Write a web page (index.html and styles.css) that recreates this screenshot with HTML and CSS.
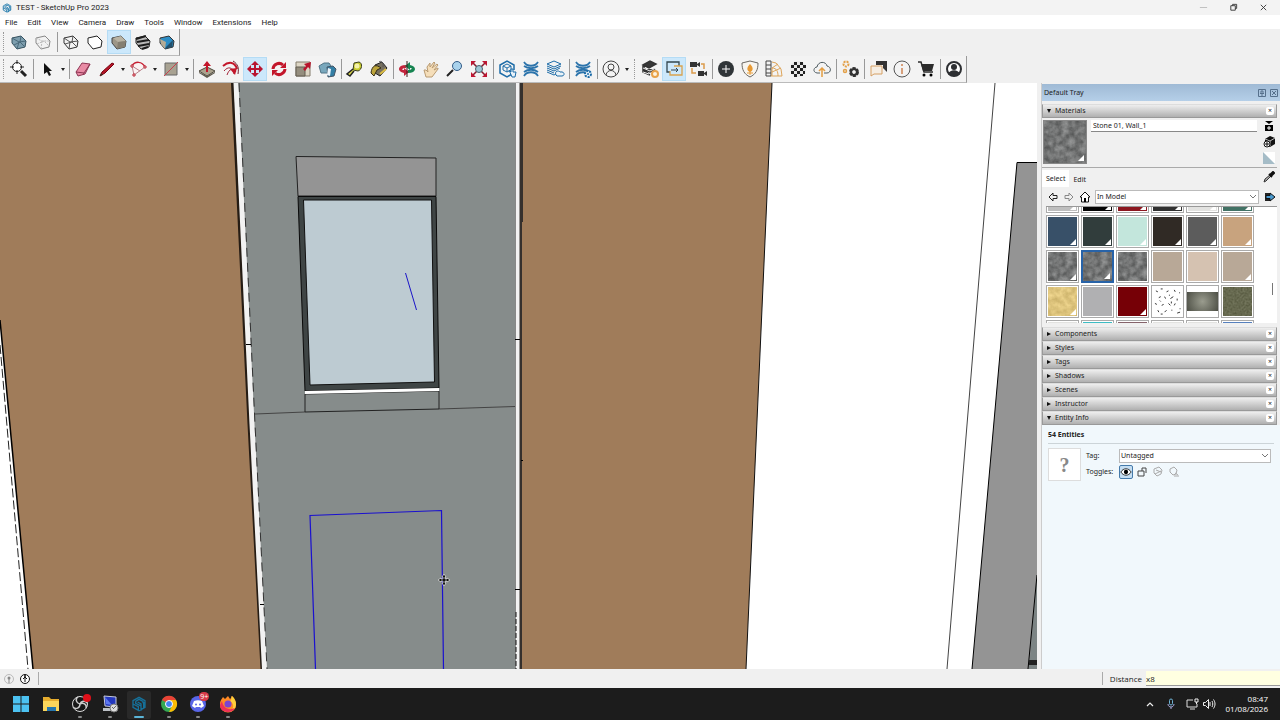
FILE: index.html
```
<!DOCTYPE html>
<html lang="en">
<head>
	<meta charset="UTF-8">
	<title>TEST - SketchUp Pro 2023</title>
	<link rel="stylesheet" href="styles.css">
</head>
<body>
	<!-- shared symbols -->
	<svg class="defs" aria-hidden="true">
		<filter id="stone" x="0" y="0" width="100%" height="100%" color-interpolation-filters="sRGB">
			<feTurbulence type="fractalNoise" baseFrequency="0.16" numOctaves="3" seed="4"/>
			<feColorMatrix values="0.35 0 0 0 0.28  0.35 0 0 0 0.285  0.35 0 0 0 0.285  0 0 0 0 1"/>
		</filter>
		<filter id="sand" x="0" y="0" width="100%" height="100%" color-interpolation-filters="sRGB">
			<feTurbulence type="fractalNoise" baseFrequency="0.18" numOctaves="3" seed="2"/>
			<feColorMatrix values="0.2 0 0 0 0.77  0.2 0 0 0 0.67  0.2 0 0 0 0.39  0 0 0 0 1"/>
		</filter>
		<filter id="moss" x="0" y="0" width="100%" height="100%" color-interpolation-filters="sRGB">
			<feTurbulence type="fractalNoise" baseFrequency="0.5" numOctaves="2" seed="7"/>
			<feColorMatrix values="0.2 0 0 0 0.3  0.2 0 0 0 0.31  0.2 0 0 0 0.21  0 0 0 0 1"/>
		</filter>
		<symbol id="cube" viewBox="0 0 24 24">
			<path d="M5 8l9-2 5 5-1 6-8 2-5-6z" stroke="currentColor" stroke-linejoin="round"/>
		</symbol>
		<symbol id="waves" viewBox="0 0 24 24">
			<path d="M5 5c3 5 11 5 14 0M5 9c4 3 10 3 14 0M5 15c4-3 10-3 14 0M5 19c3-5 11-5 14 0" fill="none" stroke="#2b73ab" stroke-width="1.800"/>
		</symbol>
		<symbol id="sketchup" viewBox="0 0 24 24">
			<path d="M3 7l9-5 9 5v10l-9 5-9-5zM7 8l5-3 6 3v3M7 8v3l8 4v3M3 12l8 4v5M15 22V12l-5-3M19 19V9" fill="none" stroke="currentColor" stroke-width="2"/>
		</symbol>
	</svg>

	<header class="titlebar">
		<svg class="logo" viewBox="0 0 24 24"><use href="#sketchup"/></svg>
		<h1>TEST - SketchUp Pro 2023</h1>
		<div class="controls">
			<button aria-label="Minimize"><svg viewBox="0 0 10 10"><path d="M1 5h8" stroke="#bbb"/></svg></button>
			<button aria-label="Restore"><svg viewBox="0 0 10 10"><path d="M2 3h5v5H2zM4 3V1.500h4.500V6H7" fill="none" stroke="#333"/></svg></button>
			<button aria-label="Close"><svg viewBox="0 0 10 10"><path d="M2 2l6 6M8 2l-6 6" stroke="#333"/></svg></button>
		</div>
	</header>

	<nav class="menubar">
		<button>File</button>
		<button>Edit</button>
		<button>View</button>
		<button>Camera</button>
		<button>Draw</button>
		<button>Tools</button>
		<button>Window</button>
		<button>Extensions</button>
		<button>Help</button>
	</nav>

	<!-- face styles -->
	<div class="toolbar styles">
		<span class="grip"></span>
		<button aria-label="X-Ray"><svg viewBox="0 0 24 24"><g color="#34505e" fill="#7d9eae"><use href="#cube"/></g><path d="M5 8l7 4 7-1M12 12l-2 7M7 15l6-3 5 5M14 6l-1 6" fill="none" stroke="#49697a"/></svg></button>
		<button aria-label="Back Edges"><svg viewBox="0 0 24 24"><g color="#888" fill="#f2f2f2"><use href="#cube"/></g><path d="M5 8l6 3 8 0M11 11l-1 8M6 14l7-3 5 5" fill="none" stroke="#bbb" stroke-dasharray="2 1"/></svg></button>
		<span class="sep"></span>
		<button aria-label="Wireframe"><svg viewBox="0 0 24 24"><g color="#333" fill="none"><use href="#cube"/></g><path d="M5 8l6 4 8-1M11 12l-1 7M6 14l7-2 5 5M14 6l-1 6" fill="none" stroke="#555"/></svg></button>
		<button aria-label="Hidden Line"><svg viewBox="0 0 24 24"><g color="#222" fill="#fff"><use href="#cube"/></g></svg></button>
		<button class="on" aria-label="Shaded"><svg viewBox="0 0 24 24"><g color="#444" fill="#9d9788"><use href="#cube"/></g><path d="M6 8l8-2 5 5-8 1z" fill="#b9b3a3"/><path d="M11 12l8-1-1 6-8 2z" fill="#857f71"/></svg></button>
		<button aria-label="Shaded with Textures"><svg viewBox="0 0 24 24"><g color="#222" fill="#bbb"><use href="#cube"/></g><path d="M5 9l10-3M6 12l12-2M7 16l11-2M11 19l6-2" stroke="#1d1d1d" stroke-width="2"/></svg></button>
		<button aria-label="Monochrome"><svg viewBox="0 0 24 24"><g color="#333" fill="#2d8dc4"><use href="#cube"/></g><path d="M5 9l6 3-1 7-4-5z" fill="#b6ab94"/><path d="M11 17l7-7-1 7-7 2z" fill="#24516c"/></svg></button>
	</div>

	<div class="toolbar tools">
		<span class="grip"></span>
		<button aria-label="Search"><svg viewBox="0 0 24 24"><circle cx="10" cy="10" r="4.500" fill="#fff" stroke="#222"/><path d="M10 3v4M10 13v4M3 10h4M13 10h4" stroke="#222"/><path d="M14 14l5 5" stroke="#222" stroke-width="3"/></svg></button>
		<span class="sep"></span>
		<button aria-label="Select"><svg viewBox="0 0 24 24"><path d="M9 6v11l3-2 2 4 2-1-2-4h3z" fill="#111"/></svg></button>
		<button class="drop" aria-label="Select options"></button>
		<span class="sep"></span>
		<button aria-label="Eraser"><svg viewBox="0 0 24 24"><path d="M5 15l6-9 8 1-5 10-7 2z" fill="#e98ba5" stroke="#8d3553"/><path d="M5 15l8 1 6-9M13 16l-1 2" stroke="#8d3553" fill="none"/></svg></button>
		<button aria-label="Lines"><svg viewBox="0 0 24 24"><path d="M5 19l2-4 10-9 2 1-9 9z" fill="#b51626" stroke="#701"/><path d="M5 19l1-3 2 2z" fill="#332"/></svg></button>
		<button class="drop" aria-label="Line options"></button>
		<button aria-label="Arcs"><svg viewBox="0 0 24 24"><path d="M7 18L5 9C8 4 15 4 18 10z" fill="#fbf3f3"/><path d="M7 18L18 10M5 9l8 5M7 18L5 9" stroke="#b98089"/><path d="M5 9C8 4 15 4 18 10" fill="none" stroke="#c62034" stroke-width="1.500"/><path d="M6 17h2v2H6zM17 9h2v2h-2zM4 8h2v2H4z" fill="#fff" stroke="#b23"/></svg></button>
		<button class="drop" aria-label="Arc options"></button>
		<button aria-label="Shapes"><svg viewBox="0 0 24 24"><path d="M6 6h12v12H6z" fill="#a8a292" stroke="#666"/><path d="M5 19L19 5" stroke="#c8404e"/></svg></button>
		<button class="drop" aria-label="Shape options"></button>
		<span class="sep"></span>
		<button aria-label="Push/Pull"><svg viewBox="0 0 24 24"><path d="M4 14l8-4 8 4-8 5z" fill="#aaa28d" stroke="#4d493e"/><path d="M4 15l8 4 8-4v1l-8 5-8-5z" fill="#605b4e"/><path d="M11 15V9H8l4-5 4 5h-3v6z" fill="#c3162a"/></svg></button>
		<button aria-label="Follow Me"><svg viewBox="0 0 24 24"><path d="M4 9c6-5 12-4 14 3" fill="none" stroke="#c3162a" stroke-width="2"/><path d="M5 14c4-5 9-4 10 3M8 18c2-6 6-8 9-3" fill="none" stroke="#a3263a"/><path d="M14 4c5 3 6 7 5 13" fill="none" stroke="#702231"/><path d="M11 12l7-1-2 7z" fill="#c3162a"/></svg></button>
		<button class="on" aria-label="Move"><svg viewBox="0 0 24 24"><path d="M12 4l4 4h-3v3h3V8l4 4-4 4v-3h-3v3h3l-4 4-4-4h3v-3H8v3l-4-4 4-4v3h3V8H8z" fill="#b81431"/></svg></button>
		<button aria-label="Rotate"><svg viewBox="0 0 24 24"><path d="M6 12a6 6 0 0 1 10-4M18 12a6 6 0 0 1-10 4" fill="none" stroke="#c3162a" stroke-width="3"/><path d="M19 5v6h-6zM5 19v-6h6z" fill="#c3162a"/></svg></button>
		<button aria-label="Scale"><svg viewBox="0 0 24 24"><path d="M5 5h14v14H5z" fill="#ddd6c5" stroke="#847c6c"/><path d="M5 10h9v9H5z" fill="#958e7e" stroke="#625d51"/><path d="M12 12l3-3-2-2 7-2-1 7-2-2-3 4z" fill="#b8142c"/></svg></button>
		<button aria-label="Outer Shell"><svg viewBox="0 0 24 24"><path d="M4 9l5-3h5l2 3v7H6z" fill="#79a8bd" stroke="#507587"/><path d="M12 10l6-1 3 3-2 7-6 1z" fill="#347fa5" stroke="#456"/><path d="M13 11l3 1-1 7-3-1z" fill="#edf6fc"/></svg></button>
		<span class="sep"></span>
		<button aria-label="Tape Measure"><svg viewBox="0 0 24 24"><path d="M11 6l5-1c4 1 3 8-1 9l-5-1z" fill="#c8cc2e" stroke="#3c3f20"/><path d="M10 12l-6 5 3 2 4-5" stroke="#222" stroke-width="1.500" fill="#d8d64a"/><circle cx="14" cy="9" r="2.500" fill="#f4f1aa"/></svg></button>
		<button aria-label="Paint Bucket"><svg viewBox="0 0 24 24"><path d="M8 8l7-3 5 6-7 8-5-3z" fill="#77705f" stroke="#222"/><path d="M4 16c1-8 5-9 10-5l-4 2-3 6z" fill="#bda53b" stroke="#342d16"/><path d="M12 5c2-2 5 1 4 5" fill="none" stroke="#555"/><path d="M13 17l6-5" stroke="#dabb42" stroke-width="2"/></svg></button>
		<span class="sep"></span>
		<button aria-label="Orbit"><svg viewBox="0 0 24 24"><path d="M11 8c-9 0-9 7-2 8v3l5-4-5-4v2c-3 0-2-2 2-2z" fill="#c3243c"/><path d="M13 16c9 0 9-7 2-8V5l-5 4 5 4v-2c3 0 2 2-2 2z" fill="#168451"/><path d="M12 4v16" stroke="#3b1919"/></svg></button>
		<button aria-label="Pan"><svg viewBox="0 0 24 24"><path d="M7 20l-2-7 2 0 2 2-1-5 3-4v4l4-5 1 1-3 5 5-4 1 1-4 5 4-2v1l-6 8z" fill="#f5deb9" stroke="#b99b72"/></svg></button>
		<button aria-label="Zoom"><svg viewBox="0 0 24 24"><circle cx="14" cy="9" r="4.500" fill="#a9d2ec" stroke="#335b86"/><path d="M10 13l-6 6" stroke="#222" stroke-width="2"/></svg></button>
		<button aria-label="Zoom Extents"><svg viewBox="0 0 24 24"><path d="M5 5l14 14M19 5L5 19" stroke="#861a2d" stroke-width="1.500"/><path d="M4 4h5L4 9zM20 4h-5l5 5zM4 20v-5l5 5zM20 20v-5l-5 5z" fill="#be1632"/><circle cx="12" cy="12" r="3.500" fill="#9cc7d5" stroke="#445e6a"/></svg></button>
		<span class="sep"></span>
		<button aria-label="3D Warehouse"><svg viewBox="0 0 24 24"><path d="M17 17l-5 3-7-4V8l7-4 7 4v5" fill="none" stroke="#1d6ca8" stroke-width="1.500"/><path d="M8 9l4-2 4 2v4l-4 2-4-2zM8 9l4 2 4-2M12 11v4" fill="none" stroke="#1d6ca8"/><path d="M14 13l2 2v-3h2v3h3l-1 5h-3z" fill="#e9f3fa" stroke="#1d6ca8"/></svg></button>
		<button aria-label="Extension Warehouse"><svg viewBox="0 0 24 24"><use href="#waves"/></svg></button>
		<button aria-label="Share Model"><svg viewBox="0 0 24 24"><path d="M4 7l7-3 7 3-7 3zM4 11l7 3 6-3M4 15l7 3 4-2M4 9l7 3 7-3M4 13l7 3" fill="none" stroke="#1d6ca8"/><path d="M13 18c-2-4 3-5 4-3 5-1 5 4 2 4h-5z" fill="#eaf3f8" stroke="#1d6ca8"/></svg></button>
		<span class="sep"></span>
		<button aria-label="Extension Manager"><svg viewBox="0 0 24 24"><use href="#waves"/><circle cx="17" cy="17" r="3" fill="#eef5fa" stroke="#1d6ca8" stroke-width="2" stroke-dasharray="2 1"/><circle cx="17" cy="17" r="1" fill="#1d6ca8"/></svg></button>
		<span class="sep"></span>
		<button aria-label="Account"><svg viewBox="0 0 24 24"><circle cx="12" cy="12" r="8" fill="none" stroke="#444"/><circle cx="12" cy="10" r="3" fill="none" stroke="#444"/><path d="M7 18c1-6 9-6 10 0" fill="none" stroke="#444"/></svg></button>
		<button class="drop" aria-label="Account options"></button>
		<span class="grip wide"></span>
		<button aria-label="Layers settings"><svg viewBox="0 0 24 24"><path d="M5 8l7-4 6 3-7 4zM5 12l7 3 5-3M5 8v7l7 3" fill="#383838" stroke="#333" stroke-width="1.500"/><path d="M5 11l7 3 6-3M5 15l6 2" fill="none" stroke="#eee"/><circle cx="17" cy="17" r="3" fill="#fff2dc" stroke="#e8a24a" stroke-width="2"/></svg></button>
		<button class="on" aria-label="Sync view"><svg viewBox="0 0 24 24"><path d="M8 15H5V5h12v4" fill="none" stroke="#32454e" stroke-width="1.300"/><path d="M12 9h8v9H8v-4" fill="none" stroke="#d9a24e" stroke-width="1.300"/><path d="M9 13h7M14 11l2 2-2 2" fill="none" stroke="#32454e"/></svg></button>
		<button aria-label="Camera path"><svg viewBox="0 0 24 24"><path d="M4 5h7v5H4zM11 7l3-2v5l-3-2M12 14h6v5h-6zM18 16l3-2v5l-3-2" fill="#333"/><path d="M15 7h3v5M6 11v5h4" fill="none" stroke="#db9c4c" stroke-width="1.500"/></svg></button>
		<span class="sep"></span>
		<button aria-label="Add"><svg viewBox="0 0 24 24"><circle cx="12" cy="12" r="8" fill="#303538"/><path d="M12 8v8M8 12h8" stroke="#fff"/></svg></button>
		<button aria-label="Shield"><svg viewBox="0 0 24 24"><path d="M12 4l8 2c0 7-2 11-8 14-6-3-8-7-8-14z" fill="#f8f5ef" stroke="#6c6964"/><path d="M12 7c4 4 3 7 0 8-3-1-4-4 0-8" fill="#e79a35"/><path d="M9 16h6M12 13v5" stroke="#e79a35"/></svg></button>
		<button aria-label="Palette"><svg viewBox="0 0 24 24"><path d="M4 4h5v15H4zM4 8h5M4 12h5M4 16h5" fill="none" stroke="#464646"/><path d="M10 5l4 1 5 6 1 7H9M10 11l6-4M10 15l9-4M10 19v-8c5 0 6 4 6 8" fill="none" stroke="#dda55b"/></svg></button>
		<button aria-label="Checker"><svg viewBox="0 0 24 24"><circle cx="12" cy="12" r="8" fill="#e8e8e8"/><path d="M8 5h3v3H8zM14 5h3v3h-3zM5 8h3v3H5zM11 8h3v3h-3zM17 8h3v3h-3zM8 11h3v3H8zM14 11h3v3h-3zM5 14h3v3H5zM11 14h3v3h-3zM17 14h2v3h-2zM8 17h3v3H8zM14 17h3v2h-3z" fill="#222"/></svg></button>
		<button aria-label="Upload"><svg viewBox="0 0 24 24"><path d="M10 16H7c-5-1-3-6 0-6 1-6 9-6 10-1 5 1 4 7 0 7h-3" fill="none" stroke="#505d62"/><path d="M12 20v-9M9 14l3-3 3 3" fill="none" stroke="#e49e42" stroke-width="1.500"/></svg></button>
		<span class="sep"></span>
		<button aria-label="Settings"><svg viewBox="0 0 24 24"><circle cx="8" cy="7" r="2.500" fill="none" stroke="#e3a149" stroke-width="2" stroke-dasharray="2 1"/><circle cx="7" cy="14" r="1.500" fill="none" stroke="#e3a149" stroke-width="1.500"/><circle cx="16" cy="15" r="3.500" fill="none" stroke="#333" stroke-width="3" stroke-dasharray="2.700 1"/><circle cx="16" cy="15" r="3" fill="none" stroke="#333" stroke-width="2"/></svg></button>
		<span class="sep"></span>
		<button aria-label="Windows"><svg viewBox="0 0 24 24"><path d="M10 4h11v11l-4-4V8h-7z" fill="#333"/><path d="M5 9h11v8h-8l-3 2z" fill="#f6eee3" stroke="#d6a064"/></svg></button>
		<button aria-label="Info"><svg viewBox="0 0 24 24"><circle cx="12" cy="12" r="8" fill="none" stroke="#555"/><path d="M12 11v6M12 7v2" stroke="#ce8454" stroke-width="1.500"/></svg></button>
		<button aria-label="Cart"><svg viewBox="0 0 24 24"><path d="M4 5h3l3 10h9" fill="none" stroke="#2c2c2c" stroke-width="1.500"/><path d="M7 7h13l-2 7H9z" fill="#2c2c2c"/><circle cx="10" cy="18" r="1.500"/><circle cx="17" cy="18" r="1.500"/></svg></button>
		<span class="sep"></span>
		<button aria-label="Profile"><svg viewBox="0 0 24 24"><circle cx="12" cy="12" r="7" fill="#fff" stroke="#2d2f32" stroke-width="2"/><circle cx="12" cy="10" r="3" fill="#2d2f32"/><path d="M6 17c2-5 10-5 12 0-3 3-9 3-12 0" fill="#2d2f32"/></svg></button>
	</div>

	<main class="workspace">
		<div class="viewport">
			<svg class="scene" viewBox="0 83 1037 586" preserveAspectRatio="xMinYMin slice" role="img" aria-label="Model view">
				<!-- left wall -->
				<path d="M0 83H233L263 669H33L0 322z" fill="#a07c5a"/>
				<path d="M0 320L33 669" stroke="#000" stroke-width="1.500"/>
				<path d="M0 345L28 669" stroke="#222" stroke-dasharray="9 3"/>
				<!-- middle facade -->
				<path d="M236 83H517V669H266z" fill="#868c8b"/>
				<path d="M232.500 83L249 424L262 669" fill="none" stroke="#251c14" stroke-width="3"/>
				<path d="M236 83L252 424L264.500 669" fill="none" stroke="#f2f2f2" stroke-width="5"/>
				<path d="M239 83L255 424L267 669" fill="none" stroke="#333" stroke-dasharray="9 6"/>
				<path d="M246 344.500h5M260 604.500h4" stroke="#000"/>
				<path d="M255 414L305 412M439 409L515 406.500" stroke="#444"/>
				<!-- window -->
				<path d="M296 156.500L436 158V196H298z" fill="#949494" stroke="#222"/>
				<path d="M298 196.500H436L439 388L305 391z" fill="#3f4545" stroke="#0a0a0a"/>
				<path d="M303.500 200H431.500L434.500 382L310 385z" fill="#bdcbd2" stroke="#111"/>
				<path d="M305 394L439 391V409L305 412z" fill="#868c8b" stroke="#222"/>
				<path d="M305 391L439 388V391L305 394z" fill="#fff"/>
				<path d="M405.500 273L416.500 310" stroke="#1a14c8"/>
				<!-- right wall -->
				<path d="M522 83H772L746 669H522z" fill="#a07c5a"/>
				<path d="M772 83L746 669" stroke="#111"/>
				<path d="M515 83h5v586h-5z" fill="#f2f2f2"/>
				<path d="M515.500 83V669" stroke="#888"/>
				<path d="M519.500 83h3.500v139h-1v447h-2.500z" fill="#35302d"/>
				<path d="M515 339.500h5M515 589.500h5M521 460.500h2" stroke="#000"/>
				<path d="M516 612V669" stroke="#111" stroke-dasharray="5 2"/>
				<!-- far right -->
				<path d="M995 83L947 669" stroke="#444"/>
				<path d="M1017 162H1037V669H972z" fill="#949494"/>
				<path d="M1037 162.500H1017L972 669" fill="none" stroke="#000"/>
				<path d="M1037 575V669H1029z" fill="#7c8484"/>
				<path d="M1037 575L1028 669" stroke="#000"/>
				<path d="M1029 660h8v5h-8z" fill="#222"/>
				<!-- moved copy -->
				<path d="M315.500 669L310 515.500L441.500 510.500L443.500 669" fill="none" stroke="#1a10d0" stroke-width="1.200"/>
				<path d="M444 574l2 3h-1v2h2v-1l3 2-3 2v-1h-2v2h1l-2 3-2-3h1v-2h-2v1l-3-2 3-2v1h2v-2h-1z" fill="#111" stroke="#e8e8e8" stroke-width="0.700"/>
			</svg>
		</div>

		<aside class="tray">
			<header class="tray-title">
				<h2>Default Tray</h2>
				<button class="pin" aria-label="Pin"><svg viewBox="0 0 8 8"><path d="M0.500 0.500h7v7h-7zM3 2v2.500h2V2zM2 4.500h4M4 5v2" fill="none" stroke="#56708c"/></svg></button>
				<button class="pin" aria-label="Close tray"><svg viewBox="0 0 8 8"><path d="M0.500 0.500h7v7h-7zM2 2l4 4M6 2l-4 4" fill="none" stroke="#56708c"/></svg></button>
			</header>

			<section class="materials">
				<h3 class="bar open"><button class="fold">Materials</button><button class="x" aria-label="Close Materials">×</button></h3>
				<div class="current">
					<div class="preview used"><svg><rect width="100%" height="100%" filter="url(#stone)"/></svg></div>
					<input type="text" aria-label="Material name" value="Stone 01, Wall_1">
					<div class="side">
						<button aria-label="Secondary pane"><svg viewBox="0 0 12 12"><path d="M2 1h8L6 4z"/><path d="M2 5h8v6H2z"/><path d="M6 6v4M4 8h4" stroke="#fff"/></svg></button>
						<button aria-label="Create Material"><svg viewBox="0 0 12 12"><path d="M2 3l5-3 5 2v6l-5 3-5-2z" fill="#111"/><path d="M2 3l5 2 5-3M7 5v5" stroke="#bbb" fill="none"/><circle cx="4" cy="8" r="3" fill="#fff" stroke="#111"/><path d="M4 6v4M2 8h4" stroke="#111"/></svg></button>
						<button aria-label="Default material"><svg viewBox="0 0 12 12"><path d="M0 0h12v12H0z" fill="#fff"/><path d="M0 0l12 12H0z" fill="#a5bcc7"/></svg></button>
					</div>
				</div>
				<div class="tabs">
					<button class="active">Select</button>
					<button>Edit</button>
					<button class="pick" aria-label="Sample Paint"><svg viewBox="0 0 12 12"><path d="M1 11l1-3 5-4 1 1-5 5z" fill="#aaa" stroke="#333"/><path d="M6 3l3 3M7 4l3-3 1 1-3 3" stroke="#111" stroke-width="2"/></svg></button>
				</div>
				<div class="nav">
					<button aria-label="Back"><svg viewBox="0 0 12 12"><path d="M2 6l4-4v2.500h4v3H6V10z" fill="none" stroke="#222"/></svg></button>
					<button aria-label="Forward"><svg viewBox="0 0 12 12"><path d="M10 6L6 2v2.500H2v3h4V10z" fill="none" stroke="#888"/></svg></button>
					<button aria-label="In Model"><svg viewBox="0 0 12 12"><path d="M1 6l5-5 5 5H9.500v5h-7V6z" fill="#fff" stroke="#111"/><path d="M5 7h2v4H5z"/></svg></button>
					<select aria-label="Library"><option>In Model</option></select>
					<button class="details" aria-label="Details"><svg viewBox="0 0 12 12"><path d="M1 2h6v8H1z" fill="#222"/><path d="M2 4.500h4V2l5 4-5 4V7.500H2z" fill="#4a9bd1" stroke="#111"/></svg></button>
				</div>
				<div class="library">
					<div class="swatches">
						<button class="used silver"></button>
						<button class="used black"></button>
						<button class="used red"></button>
						<button class="used coal"></button>
						<button class="used pale"></button>
						<button class="used teal"></button>
						<button class="used navy"></button>
						<button class="used forest"></button>
						<button class="used mint"></button>
						<button class="used umber"></button>
						<button class="used slate"></button>
						<button class="used tan"></button>
						<button class="used"><svg><rect width="100%" height="100%" filter="url(#stone)"/></svg></button>
						<button class="used picked"><svg><rect width="100%" height="100%" filter="url(#stone)"/></svg></button>
						<button><svg><rect width="100%" height="100%" filter="url(#stone)"/></svg></button>
						<button class="taupe"></button>
						<button class="beige"></button>
						<button class="used taupe"></button>
						<button class="used"><svg><rect width="100%" height="100%" filter="url(#sand)"/></svg></button>
						<button class="gray"></button>
						<button class="used maroon"></button>
						<button><svg viewBox="0 0 30 30"><path d="M3 4l2 1M8 2h2M14 5l2-1M22 3l1 2M27 6h1M6 11l2-1M12 10l1 2M18 12l3-2M25 12v2M2 17l2 1M9 19l2-1M16 17l2 2M22 19l1-2M28 22v1M5 24l1 2M12 26l2-2M19 24h1M8 28h2M25 27l3-1M17 8v1M19 15v2M7 14l1 1" stroke="#333"/></svg></button>
						<button class="metal"></button>
						<button><svg><rect width="100%" height="100%" filter="url(#moss)"/></svg></button>
						<button class="pale"></button>
						<button class="cyan"></button>
						<button class="plum"></button>
						<button class="pale"></button>
						<button class="pale"></button>
						<button class="blue"></button>
					</div>
					<div class="scroll"></div>
				</div>
			</section>

			<h3 class="bar"><button class="fold">Components</button><button class="x" aria-label="Close Components">×</button></h3>
			<h3 class="bar"><button class="fold">Styles</button><button class="x" aria-label="Close Styles">×</button></h3>
			<h3 class="bar"><button class="fold">Tags</button><button class="x" aria-label="Close Tags">×</button></h3>
			<h3 class="bar"><button class="fold">Shadows</button><button class="x" aria-label="Close Shadows">×</button></h3>
			<h3 class="bar"><button class="fold">Scenes</button><button class="x" aria-label="Close Scenes">×</button></h3>
			<h3 class="bar"><button class="fold">Instructor</button><button class="x" aria-label="Close Instructor">×</button></h3>
			<h3 class="bar open"><button class="fold">Entity Info</button><button class="x" aria-label="Close Entity Info">×</button></h3>

			<section class="entity">
				<h4>54 Entities</h4>
				<div class="fields">
					<div class="unknown">?</div>
					<div class="rows">
						<div class="row">
							<label for="tag">Tag:</label>
							<select id="tag"><option>Untagged</option></select>
						</div>
						<div class="row">
							<span class="label">Toggles:</span>
							<button class="on" aria-label="Visible"><svg viewBox="0 0 14 14"><path d="M1 7c3-5 9-5 12 0-3 5-9 5-12 0z" fill="#fff" stroke="#111"/><circle cx="7" cy="7" r="2.500"/></svg></button>
							<button aria-label="Lock"><svg viewBox="0 0 14 14"><path d="M3 6h6v5H3zM7 6V3h4v5" fill="none" stroke="#444"/></svg></button>
							<button aria-label="Receive shadows"><svg viewBox="0 0 14 14"><path d="M3 4l5-2 3 3-1 4-4 2-3-3zM5 5l5 2M4 9l6-3" fill="none" stroke="#aaa"/></svg></button>
							<button aria-label="Cast shadows"><svg viewBox="0 0 14 14"><path d="M3 4l4-2 3 3-1 4-3 1-3-3zM7 11h5M8 8l3 2" fill="none" stroke="#aaa"/></svg></button>
						</div>
					</div>
				</div>
			</section>
		</aside>
	</main>

	<footer class="status">
		<button aria-label="Geo-location"><svg viewBox="0 0 12 12"><circle cx="6" cy="6" r="4.500" fill="none" stroke="#bbb"/><circle cx="6" cy="5" r="1.500" fill="#888"/><path d="M6 6v4" stroke="#888"/></svg></button>
		<button aria-label="Credits"><svg viewBox="0 0 12 12"><circle cx="6" cy="6" r="4.500" fill="#fff" stroke="#111"/><path d="M6 5v4M4 6l2-2 2 2" fill="none" stroke="#111"/><path d="M6 2v2" stroke="#111" stroke-width="1.500"/></svg></button>
		<p class="hint"></p>
		<label for="distance">Distance</label>
		<input type="text" id="distance" value="x8">
	</footer>

	<footer class="taskbar">
		<div class="apps">
			<button aria-label="Start"><svg viewBox="0 0 24 24"><path d="M4 4h7.500v7.500H4zM12.500 4H20v7.500h-7.500zM4 12.500h7.500V20H4zM12.500 12.500H20V20h-7.500z" fill="#4cc2f1"/></svg></button>
			<button aria-label="File Explorer"><svg viewBox="0 0 24 24"><path d="M4 5h6l2 2h8v12H4z" fill="#e6ad2e"/><path d="M4 9h16v10H4z" fill="#fbd65b"/><path d="M8 19v-4h9v4z" fill="#2576ae"/></svg></button>
			<button class="run" aria-label="OBS Studio"><svg viewBox="0 0 24 24"><circle cx="12" cy="12" r="7.500" fill="#171717" stroke="#ddd"/><path d="M12 12c-4-1-5-5-2-7M12 12c0 4-4 6-7 3M12 12c4-2 7 1 6 4M12 12c1-3 5-4 7-1" fill="none" stroke="#ccc" stroke-width="1.500"/><circle cx="19" cy="6" r="4" fill="#e0101a"/></svg></button>
			<button class="run" aria-label="Remote Desktop"><svg viewBox="0 0 24 24"><path d="M6 4l12 1v10L7 14z" fill="#2337bd" stroke="#c7cbdc"/><path d="M7 5l7 8-6-1z" fill="#5d78f0"/><path d="M5 16h9v3H5z" fill="#bcc1c6"/><circle cx="16" cy="16" r="4" fill="#ddd" stroke="#777"/><path d="M14 15l2 2M18 14l-2 2" stroke="#666"/></svg></button>
			<button class="run current-app" aria-label="SketchUp"><svg viewBox="0 0 24 24" color="#16719a"><use href="#sketchup" x="4" y="4" width="16" height="16"/></svg></button>
			<button class="run" aria-label="Chrome"><svg viewBox="0 0 24 24"><circle cx="12" cy="12" r="8" fill="#35a853"/><path d="M12 12L5 8a8 8 0 0 1 14 0z" fill="#e94235"/><path d="M12 12V8h7a8 8 0 0 1-7 12l3-6z" fill="#fbbc05"/><circle cx="12" cy="12" r="3.500" fill="#4285f4" stroke="#fff"/></svg></button>
			<button class="run" aria-label="Discord"><svg viewBox="0 0 24 24"><circle cx="12" cy="12" r="8" fill="#5865e8"/><path d="M8 9c3-1 5-1 8 0l2 5-3 2-1-1h-4l-1 1-3-2z" fill="#fff"/><circle cx="10" cy="12.500" r="1" fill="#5865e8"/><circle cx="14" cy="12.500" r="1" fill="#5865e8"/></svg><span class="badge">9+</span></button>
			<button class="run" aria-label="Firefox"><svg viewBox="0 0 24 24"><path d="M5 8l2-3 2 2 3-3 2 3c2-1 1-3 2-3 3 3 4 5 4 9a8 7.500 0 0 1-16 0c0-2 0-3 1-5z" fill="#ff8a25"/><path d="M16 4c3 3 4 5 4 9a8 7.500 0 0 1-8 7c6-2 7-8 2-11 2-1 1-4 2-5z" fill="#fdcf3c"/><path d="M4 13c0 5 4 7 8 7 4 0 6-2 7-4-6 3-12 0-13-7z" fill="#ed3157"/><circle cx="12" cy="12" r="3.500" fill="#7a45d1"/></svg></button>
		</div>
		<div class="systray">
			<button aria-label="Hidden icons"><svg viewBox="0 0 14 14"><path d="M4 9l3-3 3 3" fill="none" stroke="#eee" stroke-width="1.200"/></svg></button>
			<button class="mic" aria-label="Microphone"><svg viewBox="0 0 14 14"><rect x="5.500" y="2" width="3" height="6" rx="1.500" fill="none" stroke="#6fb4d6"/><path d="M4 7c0 4 6 4 6 0M7 10v2" fill="none" stroke="#aad"/></svg></button>
			<button aria-label="Network"><svg viewBox="0 0 14 14"><path d="M8 3H2v7h10V7M5 12h5" fill="none" stroke="#ddd"/><path d="M10 2h3v3h-3zM11.500 5v2" fill="none" stroke="#eee"/></svg></button>
			<button aria-label="Volume"><svg viewBox="0 0 14 14"><path d="M1.500 5.500h2l3-3v9l-3-3h-2zM8 5v4M10 4c1 2 1 4 0 6M11.500 2.500c2 3 2 6 0 9" fill="none" stroke="#eee"/></svg></button>
			<div class="clock"><time>08:47</time><time>01/08/2026</time></div>
		</div>
	</footer>
</body>
</html>
```
FILE: styles.css
```
* {
	box-sizing: border-box;
}
body {
	background-color: #f0f0f0;
	color: #222;
	display: flex;
	flex-direction: column;
	font: 8px/12px "Open Sans", "Noto Sans", sans-serif;
	height: 100vh;
	margin: 0px;
	overflow: hidden;
}
h1, h2, h3, h4, p {
	font-size: inherit;
	font-weight: normal;
	margin: 0px;
}
button, input, select {
	background: none;
	border: none;
	border-radius: 0px;
	color: inherit;
	font: inherit;
	margin: 0px;
	padding: 0px;
}
svg {
	display: block;
}
svg.defs {
	height: 0px;
	position: absolute;
	width: 0px;
}

/* title and menus */
.titlebar, .menubar {
	font-family: Roboto, "Open Sans", sans-serif;
}
.titlebar {
	align-items: center;
	background-color: #f3f3f3;
	display: flex;
	flex: none;
	gap: 4px;
	height: 15px;
	padding-left: 2px;
}
.titlebar .logo {
	color: #1673a8;
	height: 10px;
	width: 10px;
}
.titlebar .controls {
	display: flex;
	margin-left: auto;
	padding-right: 2px;
}
.titlebar .controls button {
	align-items: center;
	display: flex;
	height: 14px;
	justify-content: center;
	width: 30px;
}
.titlebar .controls svg {
	height: 9px;
	width: 9px;
}
.menubar {
	align-items: flex-end;
	background-color: #fff;
	display: flex;
	flex: none;
	gap: 10px;
	height: 14px;
	padding-left: 5px;
}

/* toolbars */
.toolbar {
	align-items: center;
	background-color: #f3f3f3;
	border-bottom: 1px solid #bbb;
	border-right: 1px solid #999;
	display: flex;
	flex: none;
	height: 27px;
	width: fit-content;
}
.toolbar button {
	height: 24px;
	width: 24px;
}
.toolbar button svg {
	height: 24px;
	width: 24px;
}
.toolbar button.on {
	background-color: #cce8fb;
	box-shadow: inset 0px 0px 0px 1px #b5dcf5;
}
.toolbar .drop {
	width: 8px;
}
.toolbar .drop::before {
	border: 2px solid transparent;
	border-top: 3px solid #222;
	content: "";
	display: block;
	margin: 2px auto 0px;
	width: 0px;
}
.toolbar .sep {
	border-left: 1px solid #999;
	height: 20px;
	margin: 0px 1px 0px 2px;
}
.toolbar .grip {
	border-left: 1px dotted #999;
	height: 20px;
	margin: 0px 3px;
}

/* model view */
.workspace {
	display: flex;
	flex: 1;
	min-height: 0px;
}
.viewport {
	background-color: #fff;
	flex: 1;
	min-width: 0px;
}
.scene {
	height: 100%;
	width: 100%;
}

/* tray */
.tray {
	background-color: #f0f0f0;
	border-left: 1px solid #ccc;
	display: flex;
	flex-direction: column;
	font: 7px/12px "Noto Sans", "DejaVu Sans", sans-serif;
	margin-left: 4px;
	width: 239px;
}
.tray button svg {
	height: 12px;
	width: 12px;
}
.tray-title {
	align-items: center;
	background: linear-gradient(#9fbad5, #b5cfe8);
	display: flex;
	gap: 4px;
	height: 17px;
	margin: 1px 0px 3px;
	padding: 0px 2px;
}
.tray-title h2 {
	flex: 1;
}
.tray-title .pin svg {
	height: 8px;
	width: 8px;
}
.bar {
	align-items: center;
	background: linear-gradient(#eee, #b0b0b0);
	border: 1px solid #999;
	border-top-color: #ddd;
	display: flex;
	flex: none;
	height: 14px;
	margin-right: 3px;
	padding: 0px 2px 0px 4px;
}
.bar .fold {
	align-items: center;
	display: flex;
	flex: 1;
	gap: 4px;
}
.bar .fold::before {
	border: 2px solid transparent;
	border-left: 4px solid #111;
	border-right: none;
	content: "";
}
.bar.open .fold::before {
	border: 2px solid transparent;
	border-bottom: none;
	border-top: 4px solid #111;
}
.bar .x {
	background-color: #fff;
	border-radius: 2px;
	height: 8px;
	line-height: 8px;
	width: 8px;
}

/* materials */
.current {
	border-bottom: 1px solid #aaa;
	display: flex;
	gap: 4px;
	height: 50px;
	margin-right: 3px;
	padding: 2px 2px 0px 1px;
}
.current .preview {
	border: 1px solid #888;
	height: 44px;
	position: relative;
	width: 44px;
}
.preview svg {
	height: 100%;
	width: 100%;
}
.current input {
	background-color: #fff;
	border-bottom: 1px solid #888;
	flex: 1;
	height: 12px;
	min-width: 0px;
	padding: 0px 2px;
}
.current .side {
	display: flex;
	flex-direction: column;
	gap: 4px;
	margin-left: 2px;
}
.side button {
	height: 12px;
}
.used::after {
	border: 3px solid transparent;
	border-bottom-color: #fff;
	border-right-color: #fff;
	bottom: 2px;
	content: "";
	position: absolute;
	right: 2px;
}
.tabs {
	align-items: flex-end;
	display: flex;
	height: 19px;
	padding: 0px 5px 0px 0px;
}
.tabs button {
	height: 15px;
	padding: 0px 4px;
}
.tabs .active {
	background-color: #fff;
	height: 17px;
}
.tabs .pick {
	align-self: flex-start;
	margin-left: auto;
	padding: 2px 0px 0px;
}
.nav {
	align-items: center;
	display: flex;
	gap: 4px;
	height: 19px;
	padding: 0px 4px 0px 5px;
}
.tray select {
	appearance: none;
	background: #fff linear-gradient(#fff, #fff);
	border: 1px solid #bbb;
	flex: 1;
	height: 14px;
	min-width: 0px;
	padding: 0px 1px;
}
.nav select {
	margin-right: 1px;
}
.nav select, .row select {
	background-image: linear-gradient(45deg, transparent 40%, #777 40%, #777 65%, transparent 65%), linear-gradient(-45deg, transparent 40%, #777 40%, #777 65%, transparent 65%);
	background-position: right 5px center, right 2px center;
	background-repeat: no-repeat;
	background-size: 3px 3px;
}
.library {
	background-color: #fff;
	border-top: 1px solid #999;
	display: flex;
	height: 117px;
	margin: 0px 3px 4px 4px;
	overflow: hidden;
}
.swatches {
	align-content: center;
	display: grid;
	flex: 1;
	gap: 2px;
	grid-template-columns: repeat(6, 33px);
	grid-template-rows: repeat(5, 33px);
	padding-top: 2px;
}
.swatches button {
	background-clip: content-box;
	border: 1px solid #aaa;
	padding: 1px;
	position: relative;
}
.swatches button svg {
	height: 100%;
	width: 100%;
}
.swatches .picked {
	border: 2px solid #2863a8;
	padding: 0px;
}
.swatches .silver { background-color: #bebebe; }
.swatches .black  { background-color: #050505; }
.swatches .red    { background-color: #8c1720; }
.swatches .coal   { background-color: #303030; }
.swatches .pale   { background-color: #e2e2e0; }
.swatches .teal   { background-color: #427265; }
.swatches .navy   { background-color: #385068; }
.swatches .forest { background-color: #313d3c; }
.swatches .mint   { background-color: #c3e6dc; }
.swatches .umber  { background-color: #302a25; }
.swatches .slate  { background-color: #5c5c5c; }
.swatches .tan    { background-color: #c8a37e; }
.swatches .taupe  { background-color: #b8a897; }
.swatches .beige  { background-color: #d5c2b1; }
.swatches .gray   { background-color: #b0b0b2; }
.swatches .maroon { background-color: #760006; }
.swatches .cyan   { background-color: #3dbcc4; }
.swatches .plum   { background-color: #85636b; }
.swatches .blue   { background-color: #5680bd; }
.swatches .metal {
	background: linear-gradient(#fff 20%, transparent 20%, transparent 80%, #fff 80%), radial-gradient(#9a9c8e, #3c3e35);
}
.library .scroll {
	align-self: flex-end;
	background-color: #777;
	height: 12px;
	margin: 0px 4px 28px 0px;
	width: 1px;
}

/* entity info */
.entity {
	background-color: #f1f8fc;
	flex: 1;
	padding: 4px 6px;
}
.entity h4 {
	border-bottom: 1px solid #ccd4d8;
	font-weight: bold;
	padding-bottom: 2px;
}
.entity .fields {
	display: flex;
	gap: 5px;
	padding: 4px 3px 0px 0px;
}
.entity .unknown {
	background-color: #fff;
	border: 1px solid #ddd;
	color: #888;
	font: bold 20px/32px "Liberation Serif", serif;
	height: 33px;
	text-align: center;
	width: 33px;
}
.entity .rows {
	display: flex;
	flex: 1;
	flex-direction: column;
	gap: 1px;
}
.entity .row {
	align-items: center;
	display: flex;
	gap: 2px;
	height: 15px;
}
.entity .row label, .entity .row .label {
	width: 31px;
}
.entity .row button, .entity .row button svg {
	height: 14px;
	width: 14px;
}
.entity .row button.on {
	background-color: #c5def2;
	border: 1px solid #457aaa;
	border-radius: 2px;
}
.entity .row button.on svg {
	height: 12px;
	width: 12px;
}

/* status bar */
.status {
	align-items: center;
	display: flex;
	flex: none;
	gap: 4px;
	height: 19px;
	padding-left: 3px;
}
.status button svg {
	height: 12px;
	width: 12px;
}
.status .hint {
	border-left: 1px solid #aaa;
	border-right: 1px solid #aaa;
	flex: 1;
	height: 13px;
	margin: 0px 3px;
}
.status input {
	background-color: #ffffe1;
	border-bottom: 1px solid #999;
	height: 15px;
	width: 134px;
}

/* taskbar */
.taskbar {
	background-color: #1c1c1c;
	color: #fff;
	display: flex;
	flex: none;
	height: 32px;
	justify-content: space-between;
}
.apps {
	display: flex;
	justify-content: space-between;
	padding: 3px 0px 1px 9px;
	width: 240px;
}
.apps button {
	height: 28px;
	padding: 1px 0px 3px;
	position: relative;
	width: 24px;
}
.apps button svg {
	height: 24px;
	width: 24px;
}
.apps .run::after {
	background-color: #888;
	border-radius: 1px;
	bottom: 1px;
	content: "";
	height: 2px;
	left: 10px;
	position: absolute;
	width: 4px;
}
.apps .current-app {
	background-color: #292929;
	border-radius: 2px;
}
.apps .current-app::after {
	background-color: #5bb5d8;
	left: 7px;
	width: 10px;
}
.apps .badge {
	background-color: #d83a48;
	border-radius: 5px;
	font-size: 7px;
	height: 9px;
	line-height: 9px;
	position: absolute;
	right: 1px;
	top: 1px;
	width: 10px;
}
.systray {
	align-items: center;
	display: flex;
	gap: 3px;
	padding-right: 12px;
}
.systray svg {
	height: 14px;
	width: 14px;
}
.systray .mic {
	margin: 0px 4px;
}
.clock {
	line-height: 10px;
	padding-left: 7px;
	text-align: right;
}
.clock time {
	display: block;
}
```
